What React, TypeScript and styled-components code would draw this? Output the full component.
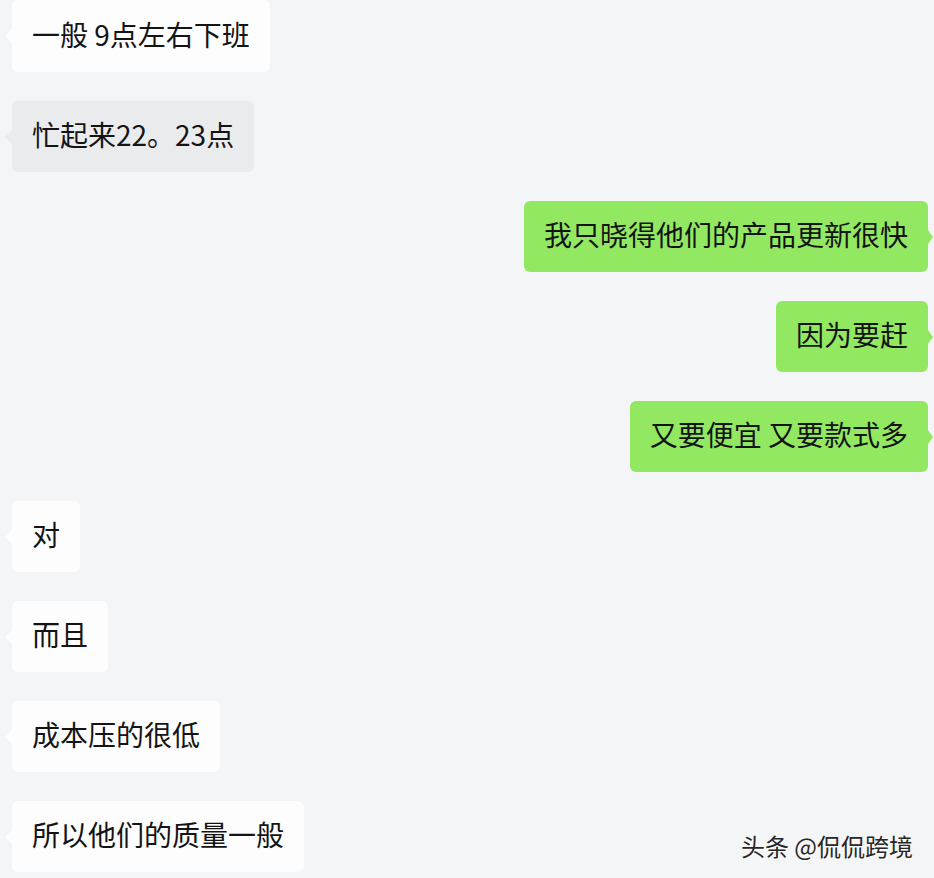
import React from "react";
import styled, { createGlobalStyle, css } from "styled-components";

const Global = createGlobalStyle`
  html, body {
    margin: 0;
    padding: 0;
    background: #f4f5f7;
  }
  body {
    font-family: "Noto Sans CJK SC", "Noto Sans", sans-serif;
  }
`;

const Page = styled.div`
  position: relative;
  width: 934px;
  height: 878px;
  overflow: hidden;
  background: #f4f5f7;
`;

const Chat = styled.div`
  display: flex;
  flex-direction: column;
  gap: 29px;
  padding: 0 6px 0 12px;
`;

type Side = "left" | "right";
type Tone = "white" | "gray" | "green";

const Row = styled.div<{ $side: Side }>`
  display: flex;
  justify-content: ${(p) => (p.$side === "left" ? "flex-start" : "flex-end")};
`;

const toneColor: Record<Tone, string> = {
  white: "#fdfdfe",
  gray: "#eaebed",
  green: "#93e862",
};

const Bubble = styled.div<{ $side: Side; $tone: Tone; $first?: boolean }>`
  position: relative;
  display: flex;
  align-items: center;
  box-sizing: border-box;
  height: ${(p) => (p.$first ? "72px" : "71px")};
  padding: 0 20px 5px;
  border-radius: 6px;
  background: ${(p) => toneColor[p.$tone]};
  color: #141414;
  font-size: 28px;
  line-height: 1;
  white-space: pre;

  &::before {
    content: "";
    position: absolute;
    top: 50%;
    margin-top: -7px;
    border-top: 7px solid transparent;
    border-bottom: 7px solid transparent;
    ${(p) =>
      p.$side === "left"
        ? css`
            left: -7px;
            border-right: 7px solid ${toneColor[p.$tone]};
          `
        : css`
            right: -5px;
            border-left: 5px solid ${toneColor[p.$tone]};
          `}
  }
`;

const Watermark = styled.div`
  position: absolute;
  right: 21px;
  bottom: 20px;
  font-family: "Noto Sans CJK SC", sans-serif;
  font-size: 24px;
  line-height: 1;
  color: #262626;
  text-shadow: 1px 1px 0 #ffffff;
`;

const messages: { side: Side; tone: Tone; text: string }[] = [
  { side: "left", tone: "white", text: "一般 9点左右下班" },
  { side: "left", tone: "gray", text: "忙起来22。23点" },
  { side: "right", tone: "green", text: "我只晓得他们的产品更新很快" },
  { side: "right", tone: "green", text: "因为要赶" },
  { side: "right", tone: "green", text: "又要便宜 又要款式多" },
  { side: "left", tone: "white", text: "对" },
  { side: "left", tone: "white", text: "而且" },
  { side: "left", tone: "white", text: "成本压的很低" },
  { side: "left", tone: "white", text: "所以他们的质量一般" },
];

export default function App() {
  return (
    <Page>
      <Global />
      <Chat>
        {messages.map((m, i) => (
          <Row key={i} $side={m.side}>
            <Bubble $side={m.side} $tone={m.tone} $first={i === 0}>
              {m.text}
            </Bubble>
          </Row>
        ))}
      </Chat>
      <Watermark>头条 @侃侃跨境</Watermark>
    </Page>
  );
}
